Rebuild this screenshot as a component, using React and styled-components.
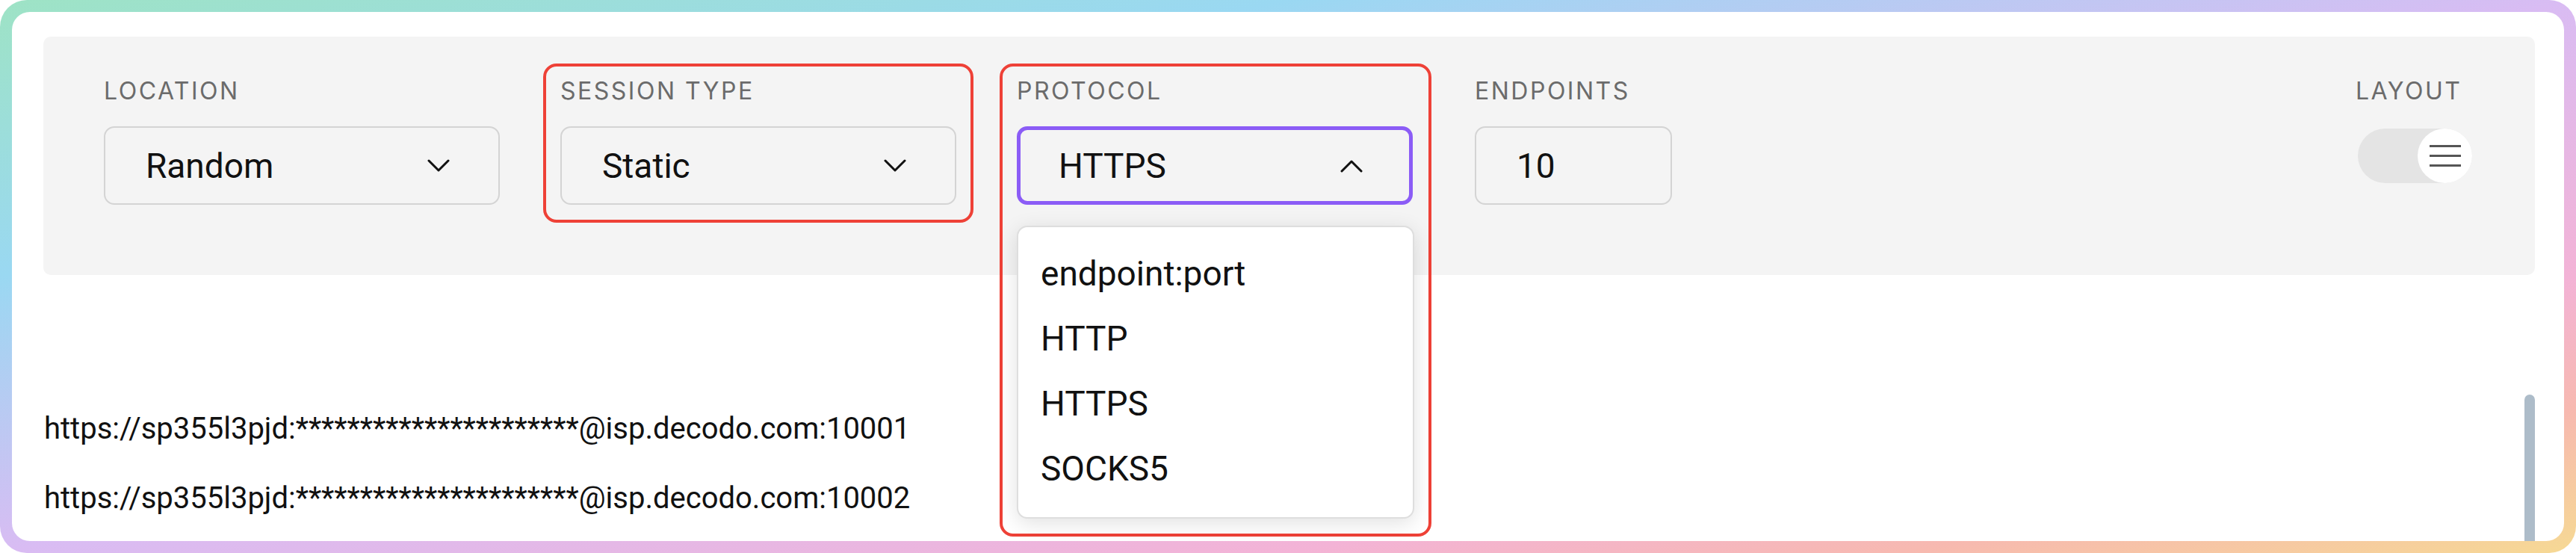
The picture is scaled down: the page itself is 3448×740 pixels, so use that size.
import React from "react";
import styled, { createGlobalStyle } from "styled-components";

const GlobalStyle = createGlobalStyle`
  html, body { margin: 0; padding: 0; background: #ffffff; }
  * { box-sizing: border-box; }
`;

const Frame = styled.div`
  width: 3448px;
  height: 740px;
  padding: 16px;
  border-radius: 36px;
  background: linear-gradient(
    to bottom right,
    #9ee3c5 0%,
    #9ad8f2 25%,
    #d9bcf3 50%,
    #f3b3d6 75%,
    #f7b9b0 87%,
    #f6d994 100%
  );
`;

const Card = styled.div`
  position: relative;
  height: 100%;
  background: #ffffff;
  border-radius: 24px;
  overflow: hidden;
  padding: 33px 39px 0 42px;
  font-family: Roboto, "Liberation Sans", sans-serif;
`;

const Panel = styled.div`
  height: 319px;
  background: #f4f4f4;
  border-radius: 10px;
  display: flex;
  align-items: flex-start;
  gap: 35px;
  padding: 36px 61px 0 58px;
  position: relative;
  z-index: 2;
`;

const Field = styled.div`
  flex: none;
  display: flex;
  flex-direction: column;
  align-items: flex-start;
  gap: 31px;
  padding: 17px 19px 20px;
  border: 4px solid ${(p) => (p.$highlight ? "#ee4137" : "transparent")};
  border-radius: 18px;
  margin-left: ${(p) => (p.$push ? "auto" : "0")};
`;

const Label = styled.div`
  font-family: Inter, "Open Sans", sans-serif;
  font-size: 32px;
  line-height: 32px;
  letter-spacing: 2.5px;
  color: #6b6b6b;
  text-transform: uppercase;
  white-space: nowrap;
`;

const SelectBox = styled.div`
  width: ${(p) => p.$width || 530}px;
  height: 105px;
  display: flex;
  align-items: center;
  justify-content: space-between;
  border: ${(p) => (p.$open ? "5px solid #8b5cf6" : "2px solid #d4d4d4")};
  border-radius: 14px;
  padding: 0 ${(p) => (p.$open ? 62 : 65)}px 0 ${(p) => (p.$open ? 51 : 54)}px;
  font-size: 46px;
  color: #111111;
  background: transparent;
`;

const NumberInput = styled.input`
  width: 264px;
  height: 105px;
  border: 2px solid #d4d4d4;
  border-radius: 14px;
  padding: 0 0 0 54px;
  font-family: Roboto, "Liberation Sans", sans-serif;
  font-size: 46px;
  color: #111111;
  background: transparent;
  outline: none;
`;

const Menu = styled.div`
  width: 532px;
  margin-top: -3px;
  background: #ffffff;
  border: 2px solid #dedede;
  border-radius: 14px;
  padding: 18px 0 22px;
  box-shadow: 0 6px 28px rgba(0, 0, 0, 0.12);
`;

const MenuItem = styled.div`
  height: 87px;
  display: flex;
  align-items: center;
  padding-left: 30px;
  font-size: 46px;
  color: #111111;
`;

const Toggle = styled.div`
  position: relative;
  width: 153px;
  height: 73px;
  margin: 3px 0 0 3px;
  border-radius: 37px;
  background: #e4e4e4;
`;

const Knob = styled.div`
  position: absolute;
  right: 0;
  top: 0;
  width: 73px;
  height: 73px;
  border-radius: 50%;
  background: #ffffff;
  display: flex;
  align-items: center;
  justify-content: center;
`;

const UrlList = styled.div`
  position: relative;
  margin-top: 159px;
  padding-left: 1px;
`;

const UrlLine = styled.div`
  font-size: 40px;
  line-height: 93px;
  color: #111111;
  white-space: nowrap;
`;

const ScrollThumb = styled.div`
  position: absolute;
  right: 0;
  top: 1px;
  width: 14px;
  height: 320px;
  border-radius: 7px;
  background: #adbcc9;
`;

const Chevron = ({ up }) => (
  <svg width="30" height="18" viewBox="0 0 30 18" fill="none">
    <polyline
      points={up ? "2,16 15,3 28,16" : "2,2 15,15 28,2"}
      stroke="#111"
      strokeWidth="3"
      strokeLinecap="round"
      strokeLinejoin="round"
    />
  </svg>
);

const Hamburger = () => (
  <svg width="42" height="30" viewBox="0 0 42 30" fill="none">
    <g stroke="#555" strokeWidth="3">
      <line x1="0" y1="1.5" x2="42" y2="1.5" />
      <line x1="0" y1="14.5" x2="42" y2="14.5" />
      <line x1="0" y1="27.5" x2="42" y2="27.5" />
    </g>
  </svg>
);

const stars = "*".repeat(22);
const urls = [
  `https://sp355l3pjd:${stars}@isp.decodo.com:10001`,
  `https://sp355l3pjd:${stars}@isp.decodo.com:10002`,
];

export default function App() {
  return (
    <>
      <GlobalStyle />
      <Frame>
        <Card>
          <Panel>
            <Field>
              <Label>Location</Label>
              <SelectBox>
                <span>Random</span>
                <Chevron />
              </SelectBox>
            </Field>
            <Field $highlight>
              <Label>Session type</Label>
              <SelectBox>
                <span>Static</span>
                <Chevron />
              </SelectBox>
            </Field>
            <Field $highlight>
              <Label>Protocol</Label>
              <SelectBox $open>
                <span>HTTPS</span>
                <Chevron up />
              </SelectBox>
              <Menu>
                {["endpoint:port", "HTTP", "HTTPS", "SOCKS5"].map((o) => (
                  <MenuItem key={o}>{o}</MenuItem>
                ))}
              </Menu>
            </Field>
            <Field>
              <Label>Endpoints</Label>
              <NumberInput readOnly value="10" />
            </Field>
            <Field $push>
              <Label>Layout</Label>
              <Toggle>
                <Knob>
                  <Hamburger />
                </Knob>
              </Toggle>
            </Field>
          </Panel>
          <UrlList>
            {urls.map((u) => (
              <UrlLine key={u}>{u}</UrlLine>
            ))}
            <ScrollThumb />
          </UrlList>
        </Card>
      </Frame>
    </>
  );
}
